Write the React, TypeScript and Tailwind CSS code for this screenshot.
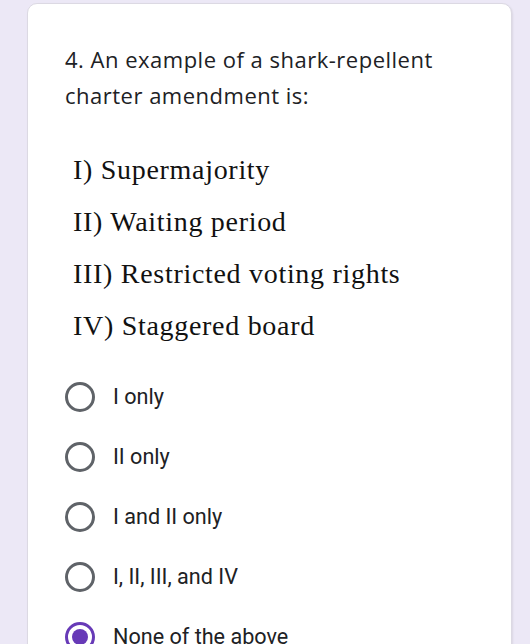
import { useState } from "react";

const statements = [
  "I) Supermajority",
  "II) Waiting period",
  "III) Restricted voting rights",
  "IV) Staggered board",
];

const options = [
  "I only",
  "II only",
  "I and II only",
  "I, II, III, and IV",
  "None of the above",
];

const Radio = ({ checked }: { checked: boolean }) => (
  <span
    className={`flex h-[30px] w-[30px] shrink-0 items-center justify-center rounded-full border-[3px] ${
      checked ? "border-[#673ab7]" : "border-[#5f6368]"
    }`}
  >
    {checked && <span className="h-[16px] w-[16px] rounded-full bg-[#673ab7]" />}
  </span>
);

const App = () => {
  const [selected, setSelected] = useState(4);

  return (
    <div className="min-h-screen bg-[#ece8f6] pl-[27px] pr-[18px] pt-[3px]">
      <div className="rounded-[10px] border border-[#dcd9e3] bg-white pb-10 pl-[37px] pr-6 pt-[37px] shadow-[1px_1px_2px_rgba(0,0,0,0.08)]">
        <p className="font-['Open_Sans',sans-serif] text-[22px] leading-[36px] tracking-[0.5px] text-[#202124]">
          4. An example of a shark-repellent
          <br />
          charter amendment is:
        </p>

        <div className="mt-[31px] pl-2 font-['Liberation_Serif',serif] text-[28px] leading-[52px] tracking-[0.7px] text-[#111111]">
          {statements.map((s) => (
            <p key={s}>{s}</p>
          ))}
        </div>

        <div className="mt-[15px] flex flex-col">
          {options.map((o, i) => (
            <label
              key={o}
              onClick={() => setSelected(i)}
              className="flex h-[60px] cursor-pointer items-center gap-[18px]"
            >
              <Radio checked={selected === i} />
              <span className="font-['Roboto',sans-serif] text-[21.6px] text-[#202124]">
                {o}
              </span>
            </label>
          ))}
        </div>
      </div>
    </div>
  );
};

export default App;
